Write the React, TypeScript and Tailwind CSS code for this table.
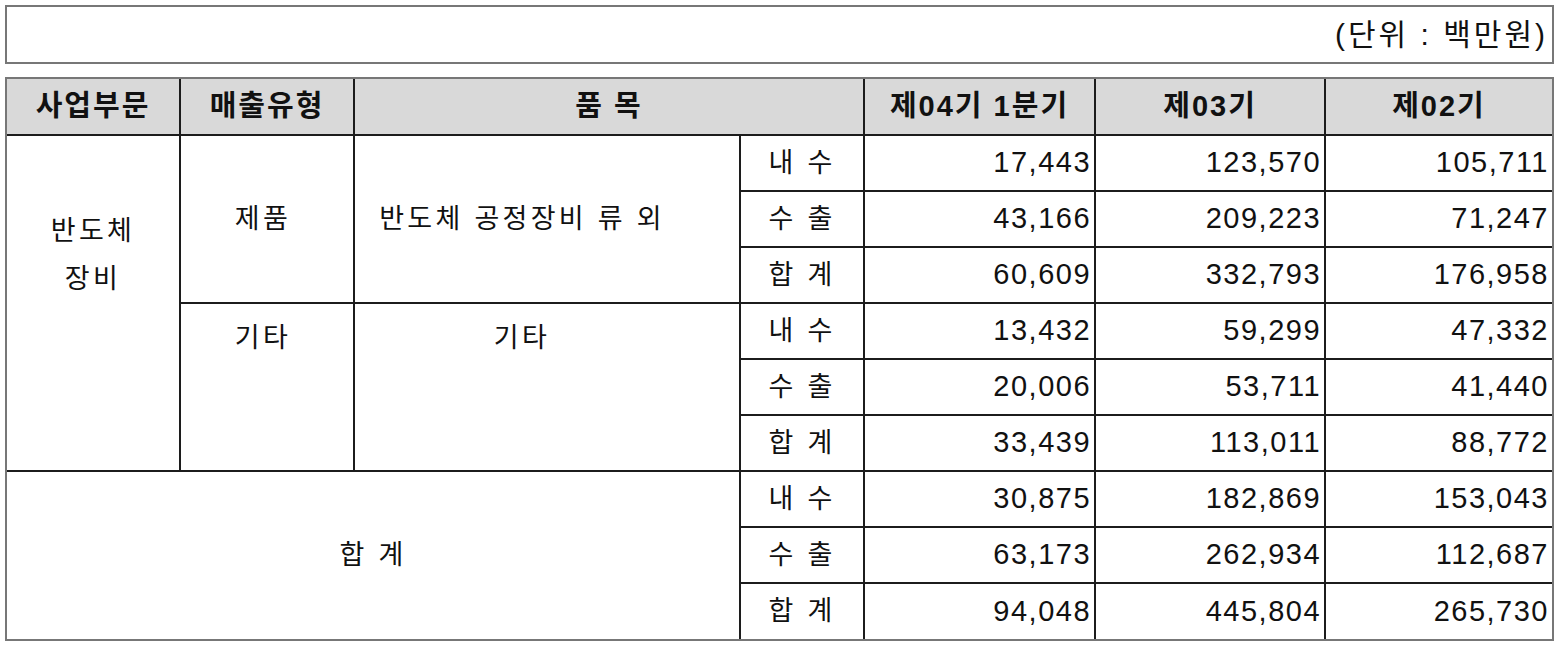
import React from "react";

type Row = { kind: string; q1: string; y3: string; y2: string };

const BLOCKS: Row[][] = [
  [
    { kind: "내 수", q1: "17,443", y3: "123,570", y2: "105,711" },
    { kind: "수 출", q1: "43,166", y3: "209,223", y2: "71,247" },
    { kind: "합 계", q1: "60,609", y3: "332,793", y2: "176,958" },
  ],
  [
    { kind: "내 수", q1: "13,432", y3: "59,299", y2: "47,332" },
    { kind: "수 출", q1: "20,006", y3: "53,711", y2: "41,440" },
    { kind: "합 계", q1: "33,439", y3: "113,011", y2: "88,772" },
  ],
  [
    { kind: "내 수", q1: "30,875", y3: "182,869", y2: "153,043" },
    { kind: "수 출", q1: "63,173", y3: "262,934", y2: "112,687" },
    { kind: "합 계", q1: "94,048", y3: "445,804", y2: "265,730" },
  ],
];

const cell = "border-2 border-[#1c1c1c] p-0";
const korean = "text-[27px] tracking-[3.3px] text-[#111]";
const num = "text-[29px] tracking-[1.5px] text-right pr-[3px] text-[#111]";
const head = "text-[29px] tracking-[2px] font-bold text-center text-[#111]";

function DataCells({ row }: { row: Row }) {
  return (
    <>
      <td className={`${cell} ${korean} text-center`}>{row.kind}</td>
      <td className={`${cell} ${num}`}>{row.q1}</td>
      <td className={`${cell} ${num}`}>{row.y3}</td>
      <td className={`${cell} ${num}`}>{row.y2}</td>
    </>
  );
}

export default function App() {
  return (
    <div
      className="bg-white pl-[5px] pr-[7px] pt-[5px] h-[646px]"
      style={{ fontFamily: '"Liberation Sans", "Noto Sans CJK KR", sans-serif' }}
    >
      <div className="h-[59px] border-2 border-[#777] flex items-center justify-end pr-[4px] text-[30px] tracking-[3px] text-[#111]">
        (단위 : 백만원)
      </div>

      <div className="mt-[13px] border-2 border-[#777]">
        <table className="w-full table-fixed border-collapse border-hidden">
          <colgroup>
            <col className="w-[173px]" />
            <col className="w-[174px]" />
            <col className="w-[386px]" />
            <col className="w-[124px]" />
            <col className="w-[231px]" />
            <col className="w-[230px]" />
            <col />
          </colgroup>
          <thead>
            <tr className="h-[56px] bg-[#d9d9d9]">
              {["사업부문", "매출유형"].map((h) => (
                <th key={h} className={`${cell} ${head}`}>
                  {h}
                </th>
              ))}
              <th colSpan={2} className={`${cell} ${head}`}>
                품 목
              </th>
              {["제04기 1분기", "제03기", "제02기"].map((h) => (
                <th key={h} className={`${cell} ${head}`}>
                  {h}
                </th>
              ))}
            </tr>
          </thead>
          <tbody>
            {BLOCKS.map((block, b) =>
              block.map((row, i) => (
                <tr key={`${b}-${i}`} className="h-[56px]">
                  {b === 0 && i === 0 && (
                    <td rowSpan={6} className={`${cell} ${korean} text-center align-top pt-[71px] leading-[48px]`}>
                      반도체
                      <br />
                      장비
                    </td>
                  )}
                  {b === 0 && i === 0 && (
                    <>
                      <td rowSpan={3} className={`${cell} ${korean} text-center align-middle pr-[8px]`}>
                        제품
                      </td>
                      <td rowSpan={3} className={`${cell} ${korean} text-center align-middle pr-[50px]`}>
                        반도체 공정장비 류 외
                      </td>
                    </>
                  )}
                  {b === 1 && i === 0 && (
                    <>
                      <td rowSpan={3} className={`${cell} ${korean} text-center align-top pt-[14px] pr-[8px]`}>
                        기타
                      </td>
                      <td rowSpan={3} className={`${cell} ${korean} text-center align-top pt-[14px] pr-[50px]`}>
                        기타
                      </td>
                    </>
                  )}
                  {b === 2 && i === 0 && (
                    <td rowSpan={3} colSpan={3} className={`${cell} ${korean} text-center align-middle`}>
                      합 계
                    </td>
                  )}
                  <DataCells row={row} />
                </tr>
              ))
            )}
          </tbody>
        </table>
      </div>
    </div>
  );
}
